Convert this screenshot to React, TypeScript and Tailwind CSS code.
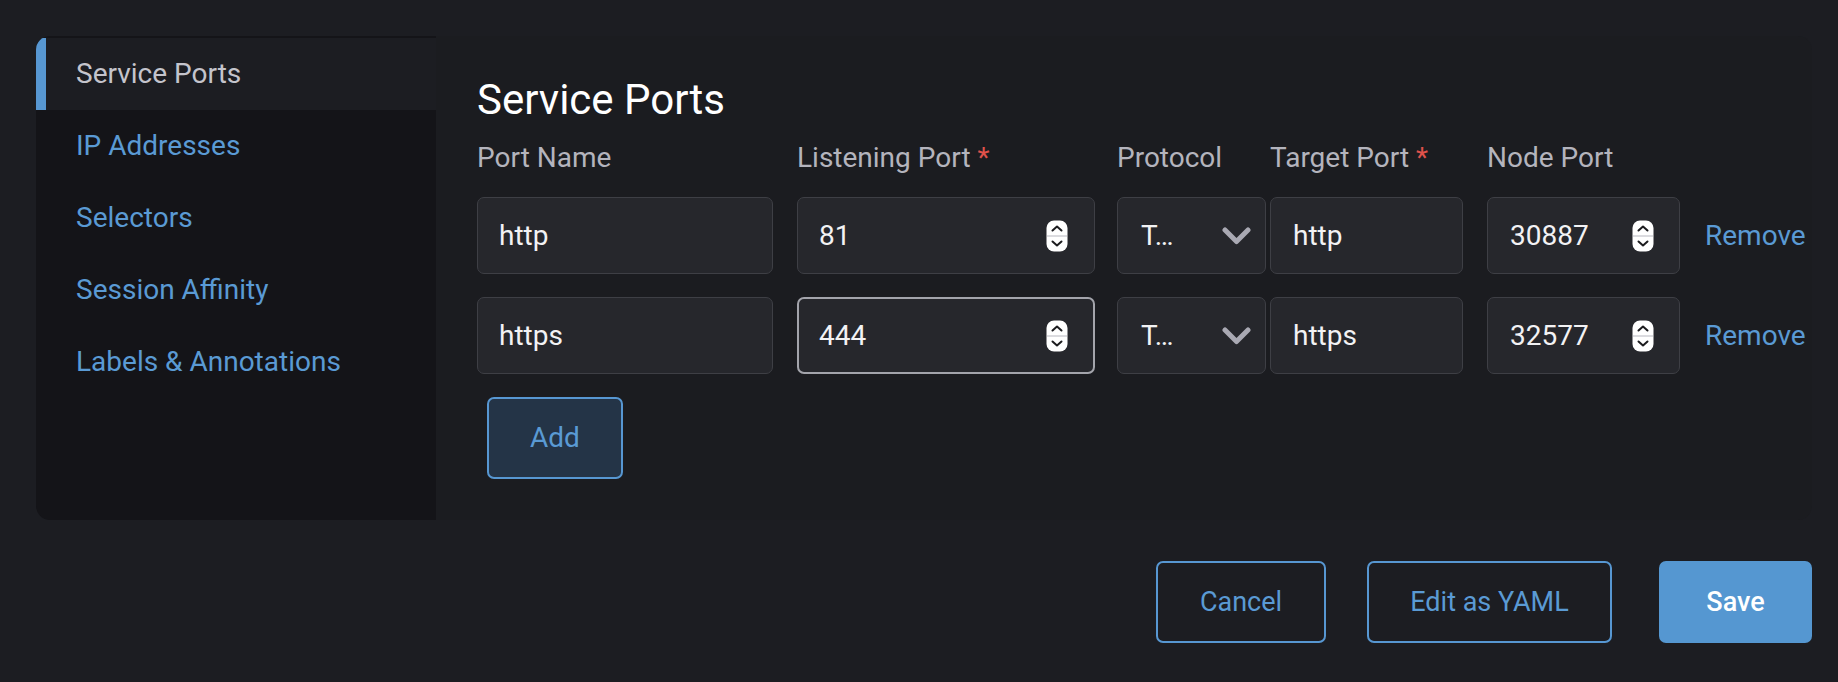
import React from "react";

const font = { fontFamily: "Roboto, 'Open Sans', sans-serif" };

const Spinner: React.FC = () => (
  <svg width="22" height="32" viewBox="0 0 22 32" className="shrink-0">
    <rect x="0.5" y="0.5" width="21" height="31" rx="7.5" fill="#ffffff" />
    <line x1="1" y1="16" x2="21" y2="16" stroke="#cfcfd5" strokeWidth="1.5" />
    <path d="M6.5 10.5 L11 6.5 L15.5 10.5" stroke="#1c1c1f" strokeWidth="2" fill="none" strokeLinecap="round" strokeLinejoin="round" />
    <path d="M6.5 21.5 L11 25.5 L15.5 21.5" stroke="#1c1c1f" strokeWidth="2" fill="none" strokeLinecap="round" strokeLinejoin="round" />
  </svg>
);

const Chevron: React.FC = () => (
  <svg width="29" height="18" viewBox="0 0 29 18" className="shrink-0">
    <path d="M3 3 L14.5 14.5 L26 3" stroke="#a9a9b3" strokeWidth="5" fill="none" strokeLinecap="round" strokeLinejoin="round" />
  </svg>
);

const box = "h-[77px] rounded-[7px] bg-[#26272c] flex items-center text-[28px] text-[#f2f2f4]";

const Row: React.FC<{ name: string; port: string; target: string; node: string; focused?: boolean; first?: boolean }> = ({ name, port, target, node, focused, first }) => (
  <div className={first ? "flex items-center mt-[22px]" : "flex items-center mt-[23px]"}>
    <div className={`${box} w-[296px] border border-[#3e3f45] pl-[21px]`}>{name}</div>
    <div
      className={
        focused
          ? `${box} ml-[24px] w-[298px] border-2 border-[#a3a4ab] pl-[20px] pr-[25px] justify-between`
          : `${box} ml-[24px] w-[298px] border border-[#3e3f45] pl-[21px] pr-[26px] justify-between`
      }
    >
      <span>{port}</span>
      <Spinner />
    </div>
    <div className={`${box} ml-[22px] w-[149px] border border-[#3e3f45] pl-[23px] pr-[14px] justify-between`}>
      <span>T…</span>
      <Chevron />
    </div>
    <div className={`${box} ml-[4px] w-[193px] border border-[#3e3f45] pl-[22px]`}>{target}</div>
    <div className={`${box} ml-[24px] w-[193px] border border-[#3e3f45] pl-[22px] pr-[25px] justify-between`}>
      <span>{node}</span>
      <Spinner />
    </div>
    <button className="ml-[25px] text-[28px] text-[#5a9ad4]">Remove</button>
  </div>
);

const navItems = ["IP Addresses", "Selectors", "Session Affinity", "Labels & Annotations"];

export default function App() {
  return (
    <div className="w-full h-[682px] bg-[#1c1d22] pt-[36px] pl-[36px] pr-[26px]" style={font}>
      <div className="flex h-[484px] rounded-[14px] overflow-hidden">
        <div className="w-[400px] shrink-0 bg-[#141418] pt-[2px]">
          <div className="h-[72px] flex items-center bg-[#1c1d22] border-l-[10px] border-[#5797d2] pl-[30px] text-[28px] text-[#c4c4cc]">
            Service Ports
          </div>
          {navItems.map((item) => (
            <div key={item} className="h-[72px] flex items-center pl-[40px] text-[28px] text-[#5a9ad4]">
              {item}
            </div>
          ))}
        </div>
        <div className="flex-1 bg-[#1b1c20] pt-[39px] pl-[41px]">
          <h1 className="text-[42px] leading-[50px] text-white">Service Ports</h1>
          <div className="flex items-center mt-[16px] h-[34px] text-[28px] leading-[34px] text-[#b4b4bd]">
            <div className="w-[296px]">Port Name</div>
            <div className="ml-[24px] w-[298px]">
              Listening Port <span className="text-[#e0524b]">*</span>
            </div>
            <div className="ml-[22px] w-[149px]">Protocol</div>
            <div className="ml-[4px] w-[193px] whitespace-nowrap">
              Target Port <span className="text-[#e0524b]">*</span>
            </div>
            <div className="ml-[24px] w-[193px]">Node Port</div>
          </div>
          <Row first name="http" port="81" target="http" node="30887" />
          <Row name="https" port="444" target="https" node="32577" focused />
          <button className="mt-[23px] ml-[10px] w-[136px] h-[82px] rounded-[7px] border-2 border-[#5797d2] bg-[#243447] text-[28px] text-[#5a9ad4]">
            Add
          </button>
        </div>
      </div>
      <div className="flex justify-end mt-[41px]">
        <button className="w-[170px] h-[82px] rounded-[7px] border-2 border-[#5797d2] text-[27px] text-[#5a9ad4]">Cancel</button>
        <button className="ml-[41px] w-[245px] h-[82px] rounded-[7px] border-2 border-[#5797d2] text-[27px] text-[#5a9ad4]">Edit as YAML</button>
        <button className="ml-[47px] w-[153px] h-[82px] rounded-[7px] bg-[#5597d1] text-[27px] font-medium text-white">Save</button>
      </div>
    </div>
  );
}
